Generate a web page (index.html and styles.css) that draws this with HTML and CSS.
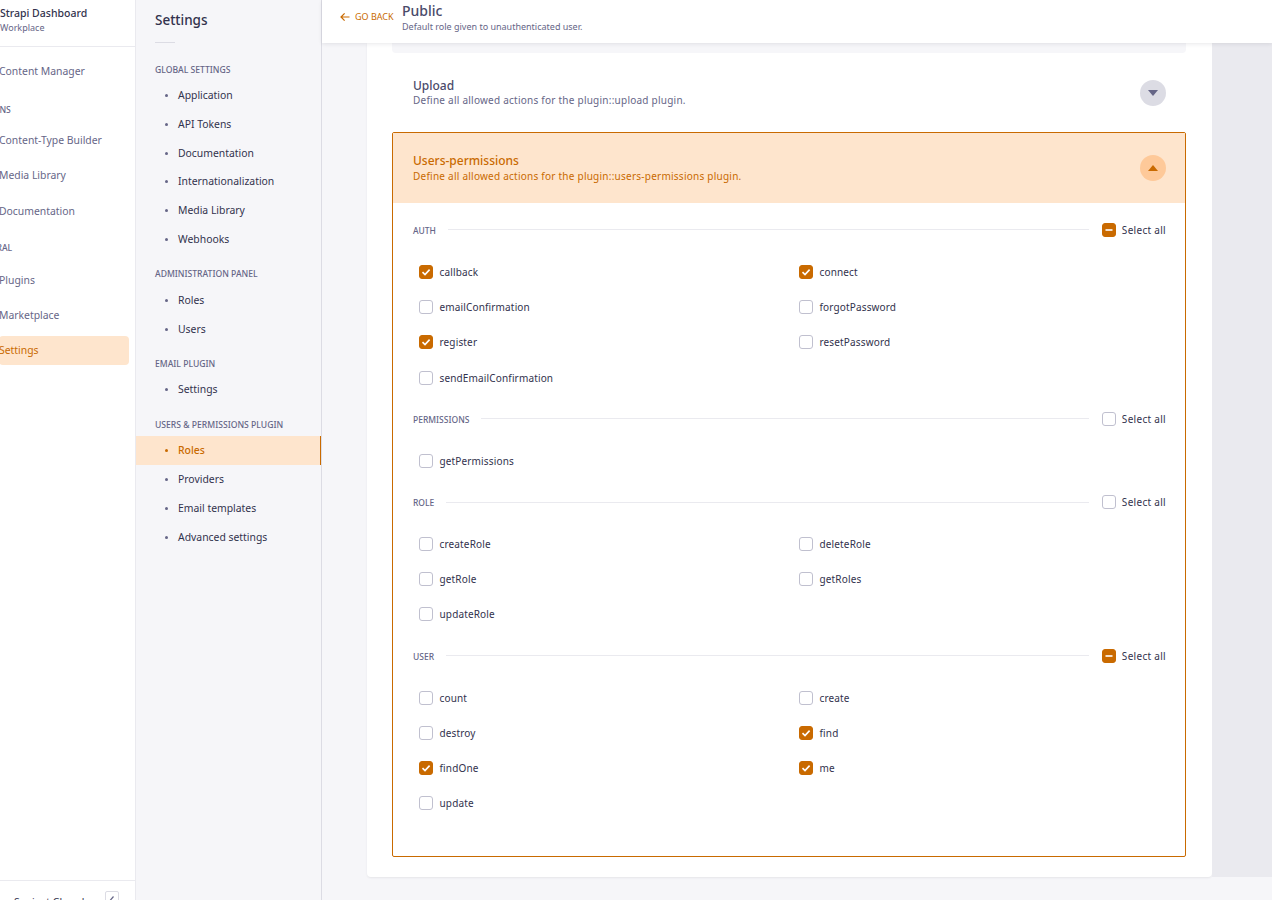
FILE: index.html
```html
<!DOCTYPE html>
<html lang="en">
<head>
<meta charset="utf-8">
<title>Strapi Dashboard</title>
<link rel="stylesheet" href="styles.css">
</head>
<body>
<div class="app">
  <nav class="mainnav">
    <div class="brand">
      <div class="brand-name">Strapi Dashboard</div>
      <div class="brand-sub">Workplace</div>
    </div>
    <div class="mainnav-links">
      <a class="mlink">Content Manager</a>
      <div class="mlabel first">PLUGINS</div>
      <a class="mlink">Content-Type Builder</a>
      <a class="mlink">Media Library</a>
      <a class="mlink">Documentation</a>
      <div class="mlabel second">GENERAL</div>
      <a class="mlink">Plugins</a>
      <a class="mlink">Marketplace</a>
      <a class="mlink active">Settings</a>
    </div>
    <div class="user">
      <span class="user-name">Sanjeet Chand</span>
      <span class="collapse"><svg width="10" height="10" viewBox="0 0 10 10"><path d="M6.5 1.5 3.5 5l3 3.5" fill="none" stroke="#666687" stroke-width="1.2"/></svg></span>
    </div>
  </nav>
  <aside class="subnav">
    <h2 class="subnav-title">Settings</h2>
    <div class="subnav-rule"></div>
    <div class="sgroup-label">GLOBAL SETTINGS</div>
    <ul class="slist">
      <li class="sitem">Application</li>
      <li class="sitem">API Tokens</li>
      <li class="sitem">Documentation</li>
      <li class="sitem">Internationalization</li>
      <li class="sitem">Media Library</li>
      <li class="sitem">Webhooks</li>
    </ul>
    <div class="sgroup-label">ADMINISTRATION PANEL</div>
    <ul class="slist">
      <li class="sitem">Roles</li>
      <li class="sitem">Users</li>
    </ul>
    <div class="sgroup-label">EMAIL PLUGIN</div>
    <ul class="slist">
      <li class="sitem">Settings</li>
    </ul>
    <div class="sgroup-label">USERS &amp; PERMISSIONS PLUGIN</div>
    <ul class="slist">
      <li class="sitem active">Roles</li>
      <li class="sitem">Providers</li>
      <li class="sitem">Email templates</li>
      <li class="sitem">Advanced settings</li>
    </ul>
  </aside>
  <main class="main">
    <header class="topbar">
      <a class="back"><svg width="10" height="10" viewBox="0 0 10 10"><path d="M9.5 5H1M4.6 1.4 1 5l3.6 3.6" fill="none" stroke="#c96a00" stroke-width="1.2"/></svg>GO BACK</a>
      <div class="top-titles">
        <div class="top-title">Public</div>
        <div class="top-sub">Default role given to unauthenticated user.</div>
      </div>
    </header>
    <div class="stage">
      <section class="card">
        <div class="prev-row"></div>
        <div class="acc-row">
          <div>
            <div class="acc-title">Upload</div>
            <div class="acc-sub">Define all allowed actions for the plugin::upload plugin.</div>
          </div>
          <span class="acc-btn"><svg width="10" height="6" viewBox="0 0 10 6"><path d="M0 0h10L5 6z" fill="#666687"/></svg></span>
        </div>
        <div class="acc-open">
          <div class="acc-row head">
            <div>
              <div class="acc-title">Users-permissions</div>
              <div class="acc-sub">Define all allowed actions for the plugin::users-permissions plugin.</div>
            </div>
            <span class="acc-btn"><svg width="10" height="6" viewBox="0 0 10 6"><path d="M5 0l5 6H0z" fill="#c96a00"/></svg></span>
          </div>
          <div class="perm-body">
            <div class="perm-head"><span class="perm-name">AUTH</span><span class="perm-line"></span><label class="sel"><span class="cb on"><svg width="10" height="10" viewBox="0 0 10 10"><path d="M1.5 5h7" stroke="#fff" stroke-width="1.6"/></svg></span>Select all</label></div>
            <div class="perm-grid">
              <label class="opt"><span class="cb on"><svg width="10" height="10" viewBox="0 0 10 10"><path d="M1.5 5.2 4 7.6l4.6-5" fill="none" stroke="#fff" stroke-width="1.6"/></svg></span>callback</label>
              <label class="opt"><span class="cb on"><svg width="10" height="10" viewBox="0 0 10 10"><path d="M1.5 5.2 4 7.6l4.6-5" fill="none" stroke="#fff" stroke-width="1.6"/></svg></span>connect</label>
              <label class="opt"><span class="cb"></span>emailConfirmation</label>
              <label class="opt"><span class="cb"></span>forgotPassword</label>
              <label class="opt"><span class="cb on"><svg width="10" height="10" viewBox="0 0 10 10"><path d="M1.5 5.2 4 7.6l4.6-5" fill="none" stroke="#fff" stroke-width="1.6"/></svg></span>register</label>
              <label class="opt"><span class="cb"></span>resetPassword</label>
              <label class="opt"><span class="cb"></span>sendEmailConfirmation</label>
            </div>
            <div class="perm-head"><span class="perm-name">PERMISSIONS</span><span class="perm-line"></span><label class="sel"><span class="cb"></span>Select all</label></div>
            <div class="perm-grid">
              <label class="opt"><span class="cb"></span>getPermissions</label>
            </div>
            <div class="perm-head"><span class="perm-name">ROLE</span><span class="perm-line"></span><label class="sel"><span class="cb"></span>Select all</label></div>
            <div class="perm-grid">
              <label class="opt"><span class="cb"></span>createRole</label>
              <label class="opt"><span class="cb"></span>deleteRole</label>
              <label class="opt"><span class="cb"></span>getRole</label>
              <label class="opt"><span class="cb"></span>getRoles</label>
              <label class="opt"><span class="cb"></span>updateRole</label>
            </div>
            <div class="perm-head"><span class="perm-name">USER</span><span class="perm-line"></span><label class="sel"><span class="cb on"><svg width="10" height="10" viewBox="0 0 10 10"><path d="M1.5 5h7" stroke="#fff" stroke-width="1.6"/></svg></span>Select all</label></div>
            <div class="perm-grid">
              <label class="opt"><span class="cb"></span>count</label>
              <label class="opt"><span class="cb"></span>create</label>
              <label class="opt"><span class="cb"></span>destroy</label>
              <label class="opt"><span class="cb on"><svg width="10" height="10" viewBox="0 0 10 10"><path d="M1.5 5.2 4 7.6l4.6-5" fill="none" stroke="#fff" stroke-width="1.6"/></svg></span>find</label>
              <label class="opt"><span class="cb on"><svg width="10" height="10" viewBox="0 0 10 10"><path d="M1.5 5.2 4 7.6l4.6-5" fill="none" stroke="#fff" stroke-width="1.6"/></svg></span>findOne</label>
              <label class="opt"><span class="cb on"><svg width="10" height="10" viewBox="0 0 10 10"><path d="M1.5 5.2 4 7.6l4.6-5" fill="none" stroke="#fff" stroke-width="1.6"/></svg></span>me</label>
              <label class="opt"><span class="cb"></span>update</label>
            </div>
          </div>
        </div>
      </section>
      <div class="gutter"></div>
    </div>
  </main>
</div>
</body>
</html>
```
FILE: styles.css
```css
* { box-sizing: border-box; }
html, body { margin: 0; height: 100%; overflow: hidden; }
body { font-family: "Noto Sans", "Open Sans", sans-serif; font-size: 11px; color: #32324d; background: #f6f6f9; }
.app { display: flex; height: 900px; overflow: hidden; }

.mainnav { width: 136px; flex: none; background: #fff; border-right: 1px solid #eaeaef; display: flex; flex-direction: column; overflow: hidden; }
.brand { height: 47px; flex: none; border-bottom: 1px solid #eaeaef; padding-top: 6px; }
.brand-name { font-size: 10.5px; line-height: 14px; color: #32324d; font-weight: 500; white-space: nowrap; }
.brand-sub { font-size: 9px; line-height: 16px; color: #666687; }
.mainnav-links { flex: 1; padding-top: 9.5px; }
.mlink { display: flex; align-items: center; height: 29px; margin: 0 6px 6.3px -1px; color: #666687; border-radius: 4px; font-size: 10.4px; white-space: nowrap; }
.mlink.active { background: #fee5cd; color: #c96a00; }
.mlabel { font-size: 8.6px; line-height: 14px; color: #666687; white-space: nowrap; font-weight: 500; }
.mlabel.first { margin: 17.6px 0 8.5px -26px; }
.mlabel.second { margin: 15.6px 0 10.5px -26px; }
.user { height: 20px; flex: none; border-top: 1px solid #eaeaef; padding: 10px 16px 0 14px; display: flex; justify-content: space-between; align-items: flex-start; }
.user-name { font-size: 10.4px; line-height: 14px; margin-top: 4px; color: #32324d; white-space: nowrap; }
.collapse { width: 14px; height: 18px; border: 1px solid #dcdce4; border-radius: 2px; display: flex; align-items: center; justify-content: center; flex: none; }

.subnav { width: 186px; flex: none; background: #f6f6f9; border-right: 1px solid #dcdce4; padding-top: 10px; overflow: hidden; }
.subnav-title { margin: 0 0 0 19px; font-size: 13.5px; line-height: 20px; font-weight: 500; color: #32324d; }
.subnav-rule { width: 20px; height: 1px; background: #dcdce4; margin: 12px 0 19.5px 19px; }
.sgroup-label { margin-left: 19px; height: 15px; line-height: 15px; font-size: 8.6px; color: #666687; font-weight: 500; white-space: nowrap; }
.slist { list-style: none; margin: 3.5px 0 13.5px; padding: 0; }
.sitem { height: 28.8px; line-height: 28.8px; padding-left: 42px; position: relative; font-size: 10.4px; color: #32324d; }
.sitem::before { content: ""; position: absolute; left: 29px; top: 13px; width: 3px; height: 3px; border-radius: 50%; background: #666687; }
.sitem.active { background: #fee5cd; color: #c96a00; border-right: 1px solid #c96a00; font-weight: 500; }
.sitem.active::before { background: #c96a00; }

.main { flex: 1; display: flex; flex-direction: column; min-width: 0; }
.topbar { height: 43px; flex: none; background: #fff; display: flex; box-shadow: 0 1px 4px rgba(33,33,52,.1); position: relative; z-index: 1; }
.back { display: flex; align-items: center; gap: 5px; margin-left: 18px; padding-bottom: 10px; font-size: 9px; color: #c96a00; width: 62px; flex: none; white-space: nowrap; }
.top-titles { padding-top: 2px; }
.top-title { font-size: 14px; line-height: 18px; font-weight: 500; color: #4a4a6a; }
.top-sub { font-size: 9px; line-height: 13px; color: #666687; }

.stage { display: flex; flex: none; padding-left: 45px; }
.card { width: 845px; flex: none; background: #fff; padding: 0 26px 20px 25px; border-radius: 0 0 4px 4px; box-shadow: 0 1px 2px rgba(33,33,52,.08); }
.gutter { flex: 1; background: #eaeaef; }
.prev-row { height: 10px; background: #f6f6f9; border-radius: 0 0 4px 4px; }
.acc-row { height: 79px; padding: 0 20px 0 21px; display: flex; align-items: center; justify-content: space-between; }
.acc-title { font-size: 12px; line-height: 15px; font-weight: 500; color: #4a4a6a; }
.acc-sub { font-size: 10px; line-height: 15px; color: #666687; letter-spacing: .24px; }
.acc-btn { width: 26px; height: 26px; border-radius: 50%; background: #dcdce4; display: flex; align-items: center; justify-content: center; }
.acc-open { height: 725px; border: 1px solid #c96a00; border-radius: 2px; }
.acc-row.head { height: 70px; padding: 0 19px 0 20px; background: #fee5cd; }
.head .acc-title, .head .acc-sub { color: #c96a00; }
.head .acc-sub { line-height: 16px; }
.head .acc-btn { background: #fec999; }
.perm-body { padding: 3.3px 19px 0 20px; }
.perm-head { height: 16px; margin-top: 15.7px; display: flex; align-items: center; }
.perm-name { font-size: 8.5px; color: #666687; margin: 1.5px 12px 0 0; white-space: nowrap; font-weight: 500; }
.perm-line { flex: 1; height: 1px; background: #eaeaef; margin-right: 13px; }
.sel { display: flex; align-items: center; gap: 6px; font-size: 10px; color: #32324d; letter-spacing: .3px; white-space: nowrap; }
.cb { width: 14px; height: 14px; border: 1px solid #c0c0cf; border-radius: 3px; background: #fff; display: flex; align-items: center; justify-content: center; flex: none; }
.cb.on { background: #c96a00; border-color: #c96a00; }
.perm-grid { display: grid; grid-template-columns: 380px 1fr; grid-auto-rows: 35.2px; margin-top: 16.4px; padding-left: 6px; }
.opt { display: flex; align-items: center; gap: 6.5px; font-size: 10px; color: #32324d; letter-spacing: .15px; white-space: nowrap; }
```
